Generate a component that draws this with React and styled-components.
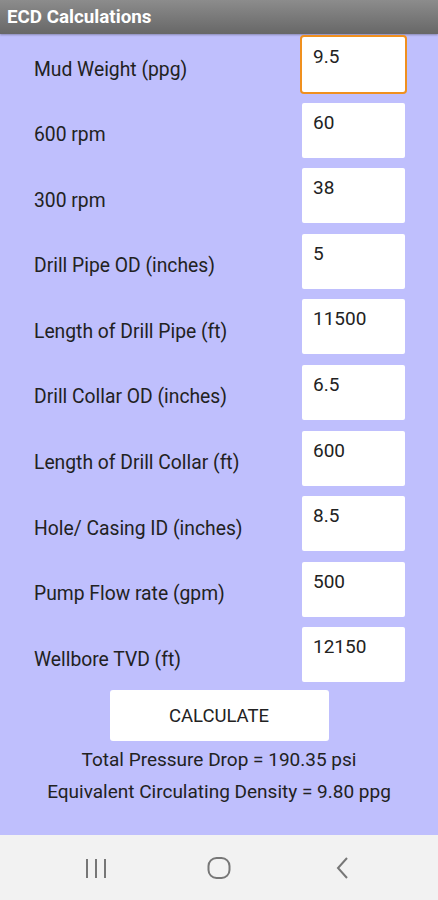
import styled, { createGlobalStyle } from "styled-components";

const Global = createGlobalStyle`
  body {
    margin: 0;
    font-family: Roboto, "Noto Sans", sans-serif;
  }
`;

const Screen = styled.div`
  width: 438px;
  height: 900px;
  display: flex;
  flex-direction: column;
  background: #bfbffd;
`;

const TitleBar = styled.div`
  height: 34px;
  display: flex;
  align-items: center;
  padding-left: 7px;
  background: linear-gradient(#8c8c8c, #676767);
  color: #fff;
  font-weight: bold;
  font-size: 18.8px;
  box-shadow: 0 1px 2px rgba(0, 0, 0, 0.3);
`;

const Content = styled.div`
  flex: 1;
  display: flex;
  flex-direction: column;
  align-items: center;
  padding-top: 3px;
`;

const Form = styled.div`
  align-self: stretch;
  display: grid;
  grid-template-columns: 1fr 103px;
  row-gap: 10.6px;
  padding: 0 33px 0 34px;
`;

const Label = styled.div`
  font-size: 19.3px;
  color: #222;
  display: flex;
  align-items: center;
  padding-top: 9px;
  white-space: nowrap;
`;

const Field = styled.div`
  height: 55px;
  background: #fff;
  box-sizing: border-box;
  padding: 8px 0 0 11px;
  font-size: 19px;
  color: #222;
  border-radius: 2px;
  box-shadow: ${(p) => (p.focused ? "0 0 0 2px #f0901e" : "none")};
`;

const Button = styled.button`
  margin-top: 8px;
  width: 219px;
  height: 51px;
  border: none;
  border-radius: 3px;
  background: #fff;
  font-family: inherit;
  font-size: 18.5px;
  color: #222;
  padding: 0;
`;

const Results = styled.div`
  margin-top: 3px;
  display: flex;
  flex-direction: column;
  align-items: center;
`;

const Result = styled.div`
  font-size: 19px;
  color: #222;
  line-height: 32px;
`;

const NavBar = styled.div`
  height: 65px;
  background: #f2f2f2;
  display: flex;
  justify-content: center;
  align-items: center;
  gap: 97px;
`;

const NavIcon = styled.svg`
  width: 26px;
  height: 26px;
  stroke: #777;
  fill: none;
`;

const fields = [
  ["Mud Weight (ppg)", "9.5"],
  ["600 rpm", "60"],
  ["300 rpm", "38"],
  ["Drill Pipe OD (inches)", "5"],
  ["Length of Drill Pipe (ft)", "11500"],
  ["Drill Collar OD (inches)", "6.5"],
  ["Length of Drill Collar (ft)", "600"],
  ["Hole/ Casing ID (inches)", "8.5"],
  ["Pump Flow rate (gpm)", "500"],
  ["Wellbore TVD (ft)", "12150"],
];

export default function App() {
  return (
    <Screen>
      <Global />
      <TitleBar>ECD Calculations</TitleBar>
      <Content>
        <Form>
          {fields.map(([label, value], i) => [
            <Label key={label}>{label}</Label>,
            <Field key={label + "v"} focused={i === 0}>
              {value}
            </Field>,
          ])}
        </Form>
        <Button>CALCULATE</Button>
        <Results>
          <Result>Total Pressure Drop = 190.35 psi</Result>
          <Result>Equivalent Circulating Density = 9.80 ppg</Result>
        </Results>
      </Content>
      <NavBar>
        <NavIcon viewBox="0 0 26 26" strokeWidth="2">
          <path d="M4 4v19M13 4v19M22 4v19" />
        </NavIcon>
        <NavIcon viewBox="0 0 26 26" strokeWidth="2">
          <rect x="2.5" y="3" width="21" height="20" rx="8" />
        </NavIcon>
        <NavIcon viewBox="0 0 26 26" strokeWidth="2">
          <path d="M18 3L9 13l9 10" />
        </NavIcon>
      </NavBar>
    </Screen>
  );
}
